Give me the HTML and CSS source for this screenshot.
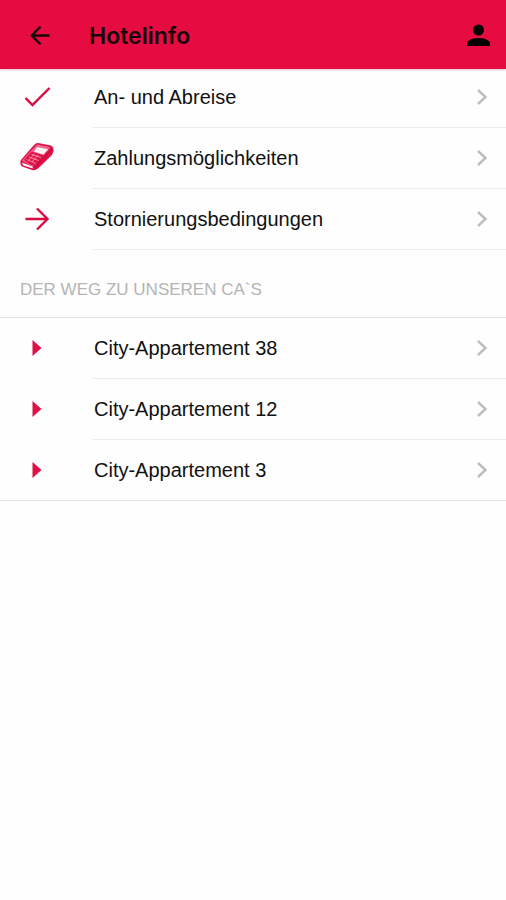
FILE: index.html
```
<!DOCTYPE html>
<html lang="de">
<head>
<meta charset="utf-8">
<meta name="viewport" content="width=device-width, initial-scale=1">
<title>Hotelinfo</title>
<link rel="stylesheet" href="styles.css">
</head>
<body>
<header class="app-bar">
  <button class="icon-button" type="button" aria-label="Zurück">
    <svg width="20" height="20" viewBox="0 0 20 20"><path class="bar-line" d="M19.500 9.500H1.800M10.500 0.700L1.700 9.500L10.500 18.300"/></svg>
  </button>
  <h1 class="title">Hotelinfo</h1>
  <button class="icon-button" type="button" aria-label="Profil">
    <svg width="24" height="24" viewBox="0 0 24 24"><circle cx="12.500" cy="6" r="5.500"/><path d="M1 22V19.500C1 16 7 14 12.500 14S24 16 24 19.500V22Z"/></svg>
  </button>
</header>
<main>
  <ul class="list">
    <li><a class="row" href="#anreise">
      <svg class="row-icon" width="34" height="34" viewBox="0 0 34 34"><path class="red-line" d="M5.500 18L12.500 25L29.500 8"/></svg>
      <span class="label">An- und Abreise</span>
      <svg class="chevron" width="12" height="18" viewBox="0 0 12 18"><path d="M2 2L9.500 9L2 16"/></svg>
    </a></li>
    <li><a class="row" href="#zahlung">
      <svg class="row-icon" width="34" height="34" viewBox="0 0 34 34">
        <path class="red" d="M0.500 19.500L14 4Q15.500 2 18 2L31 4.500Q34 6 33.500 10L32 14L18 27.500Q15 30 12 29L2 25.500Q0 24 0.500 19.500Z"/>
        <path class="pink" d="M2 19.500L15.500 5L17.500 3.600L30 6L28 9.500L15 23.500L12.500 25.500Z"/>
        <path class="red" d="M4 19L12 10.500L24 14.500L15 23.500L12 24.500Z"/>
        <path class="screen" d="M17 6L28 8.300L23.500 13.500L14 10.800Z"/>
        <path class="keys" d="M11.500 13.500L21 16.500M9 16L18.500 19.500M6.500 18.500L16 22.500M14.500 12.500L8.500 19.500M18 14L12 21"/>
        <path class="screen" d="M2 21.500L12.500 25.500L13 27.500L3 24.500Z"/>
        <path class="fold" d="M15 26L31.500 9"/>
      </svg>
      <span class="label">Zahlungsmöglichkeiten</span>
      <svg class="chevron" width="12" height="18" viewBox="0 0 12 18"><path d="M2 2L9.500 9L2 16"/></svg>
    </a></li>
    <li><a class="row" href="#storno">
      <svg class="row-icon" width="34" height="34" viewBox="0 0 34 34"><path class="red-line" d="M5.500 17H27M17 6.500L27.500 17L17 27.500"/></svg>
      <span class="label">Stornierungsbedingungen</span>
      <svg class="chevron" width="12" height="18" viewBox="0 0 12 18"><path d="M2 2L9.500 9L2 16"/></svg>
    </a></li>
  </ul>
  <h2 class="section-title">DER WEG ZU UNSEREN CA`S</h2>
  <ul class="list list-closed">
    <li><a class="row" href="#ca38">
      <svg class="row-icon" width="34" height="34" viewBox="0 0 34 34"><path class="red" d="M12.500 9L21.500 17L12.500 25Z"/></svg>
      <span class="label">City-Appartement 38</span>
      <svg class="chevron" width="12" height="18" viewBox="0 0 12 18"><path d="M2 2L9.500 9L2 16"/></svg>
    </a></li>
    <li><a class="row" href="#ca12">
      <svg class="row-icon" width="34" height="34" viewBox="0 0 34 34"><path class="red" d="M12.500 9L21.500 17L12.500 25Z"/></svg>
      <span class="label">City-Appartement 12</span>
      <svg class="chevron" width="12" height="18" viewBox="0 0 12 18"><path d="M2 2L9.500 9L2 16"/></svg>
    </a></li>
    <li><a class="row" href="#ca3">
      <svg class="row-icon" width="34" height="34" viewBox="0 0 34 34"><path class="red" d="M12.500 9L21.500 17L12.500 25Z"/></svg>
      <span class="label">City-Appartement 3</span>
      <svg class="chevron" width="12" height="18" viewBox="0 0 12 18"><path d="M2 2L9.500 9L2 16"/></svg>
    </a></li>
  </ul>
</main>
</body>
</html>
```
FILE: styles.css
```
* {
  box-sizing: border-box;
}

body {
  margin: 0;
  background: #fefefe;
  color: #111;
  font-family: "Liberation Sans", Arial, sans-serif;
  font-size: 20px;
}

.app-bar {
  display: flex;
  align-items: center;
  height: 67px;
  padding: 5px 16px 0 30px;
  background: #e60c41;
  box-shadow: 0 2px 0 #e60c41, 0 3px 2px #d8c4ce;
  color: #18020a;
}

.icon-button {
  display: flex;
  padding: 0;
  border: 0;
  background: none;
}

.bar-line {
  fill: none;
  stroke: #18020a;
  stroke-width: 2.4;
}

.title {
  flex: 1;
  margin: 0 0 0 39px;
  font-family: Inter, "Liberation Sans", sans-serif;
  font-size: 23px;
  font-weight: 600;
  line-height: 32px;
}

.list {
  margin: 0;
  padding: 0;
  list-style: none;
}

.row {
  display: flex;
  align-items: center;
  min-height: 61px;
  padding: 0 18px 2px 20px;
  background: linear-gradient(#ececec, #ececec) 92px 100% / 100% 1px no-repeat;
  color: inherit;
  text-decoration: none;
}

.label {
  flex: 1;
  margin-left: 40px;
  line-height: 24px;
}

.list-closed li:last-child .row {
  background-position: 0 100%;
  background-image: linear-gradient(#e2e2e2, #e2e2e2);
}

.section-title {
  margin: 0;
  padding: 30px 20px 17px;
  border-bottom: 1px solid #e2e2e2;
  color: #b4b4b4;
  font-size: 17px;
  font-weight: 400;
  line-height: 20px;
}

.red-line {
  fill: none;
  stroke: #d90b40;
  stroke-width: 2.4;
}

.red {
  fill: #e01047;
}

.pink {
  fill: #f0658a;
}

.screen {
  fill: #fff0f4;
}

.keys,
.fold {
  fill: none;
  stroke: #f48ca8;
  stroke-width: 1;
}

.fold {
  stroke: #b80c38;
}

.chevron path {
  fill: none;
  stroke: #bdbdbd;
  stroke-width: 2.4;
}
```
